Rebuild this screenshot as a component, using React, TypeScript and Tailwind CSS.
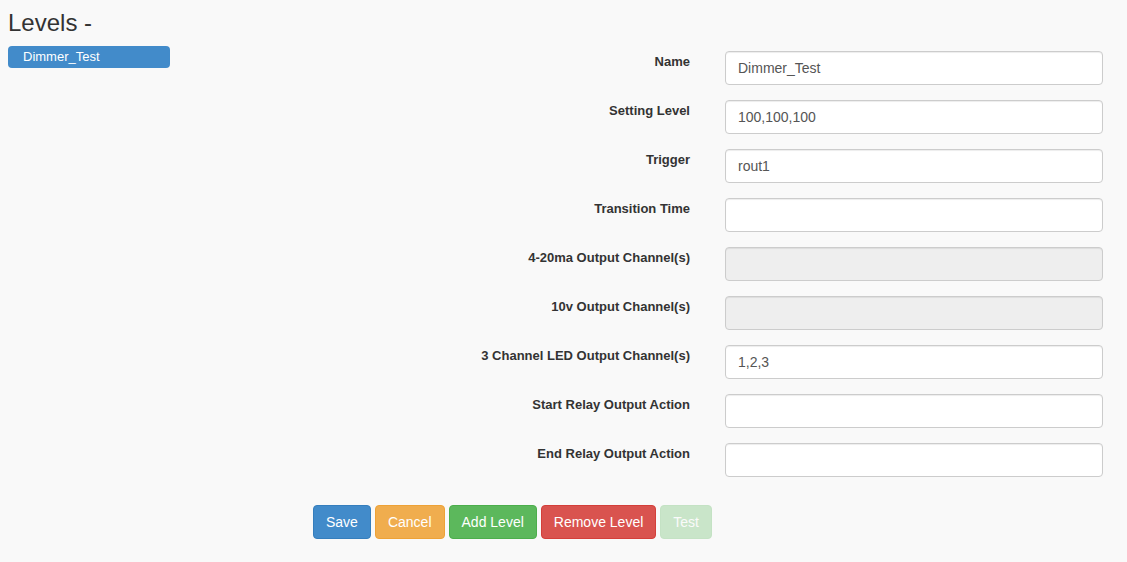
import React from 'react';

const fields = [
  { label: 'Name', value: 'Dimmer_Test' },
  { label: 'Setting Level', value: '100,100,100' },
  { label: 'Trigger', value: 'rout1' },
  { label: 'Transition Time', value: '' },
  { label: '4-20ma Output Channel(s)', value: '', disabled: true },
  { label: '10v Output Channel(s)', value: '', disabled: true },
  { label: '3 Channel LED Output Channel(s)', value: '1,2,3' },
  { label: 'Start Relay Output Action', value: '' },
  { label: 'End Relay Output Action', value: '' },
];

export default function App() {
  return (
    <div
      className="min-h-screen bg-[#f9f9f9] px-2 text-[#333]"
      style={{ fontFamily: '"Liberation Sans", Arial, sans-serif' }}
    >
      {/* Title */}
      <h1 className="pt-[10px] text-[24px] leading-[26px] font-normal text-[#333]">Levels -</h1>

      <div className="mt-[10px] flex">
        {/* Sidebar */}
        <div className="w-[162px] shrink-0">
          <div className="h-[22px] rounded-[4px] bg-[#428bca] pl-[15px] text-[13px] leading-[22px] text-white">
            Dimmer_Test
          </div>
        </div>

        {/* Form */}
        <div className="flex-1 pr-[16px] pt-[5px]">
          {fields.map((f) => (
            <div key={f.label} className="mb-[15px] grid grid-cols-[1fr_378px] gap-x-[35px]">
              <label className="pt-[2px] text-right text-[13px] leading-[18px] font-bold text-[#333]">
                {f.label}
              </label>
              <input
                readOnly
                disabled={f.disabled}
                value={f.value}
                className={
                  'h-[34px] w-full rounded-[4px] border border-[#ccc] px-[12px] text-[14px] text-[#555] shadow-[inset_0_1px_1px_rgba(0,0,0,0.075)] outline-none ' +
                  (f.disabled ? 'bg-[#eee]' : 'bg-white')
                }
              />
            </div>
          ))}

          {/* Actions */}
          <div className="mt-[28px] flex gap-[4px] pl-[143px]">
            <button className="h-[34px] rounded-[4px] border border-[#357ebd] bg-[#428bca] px-[12px] text-[14px] text-white">
              Save
            </button>
            <button className="h-[34px] rounded-[4px] border border-[#eea236] bg-[#f0ad4e] px-[12px] text-[14px] text-white">
              Cancel
            </button>
            <button className="h-[34px] rounded-[4px] border border-[#4cae4c] bg-[#5cb85c] px-[12px] text-[14px] text-white">
              Add Level
            </button>
            <button className="h-[34px] rounded-[4px] border border-[#d43f3a] bg-[#d9534f] px-[12px] text-[14px] text-white">
              Remove Level
            </button>
            <button
              disabled
              className="h-[34px] rounded-[4px] border border-[#4cae4c] bg-[#5cb85c] px-[12px] text-[14px] text-white opacity-30"
            >
              Test
            </button>
          </div>
        </div>
      </div>
    </div>
  );
}
